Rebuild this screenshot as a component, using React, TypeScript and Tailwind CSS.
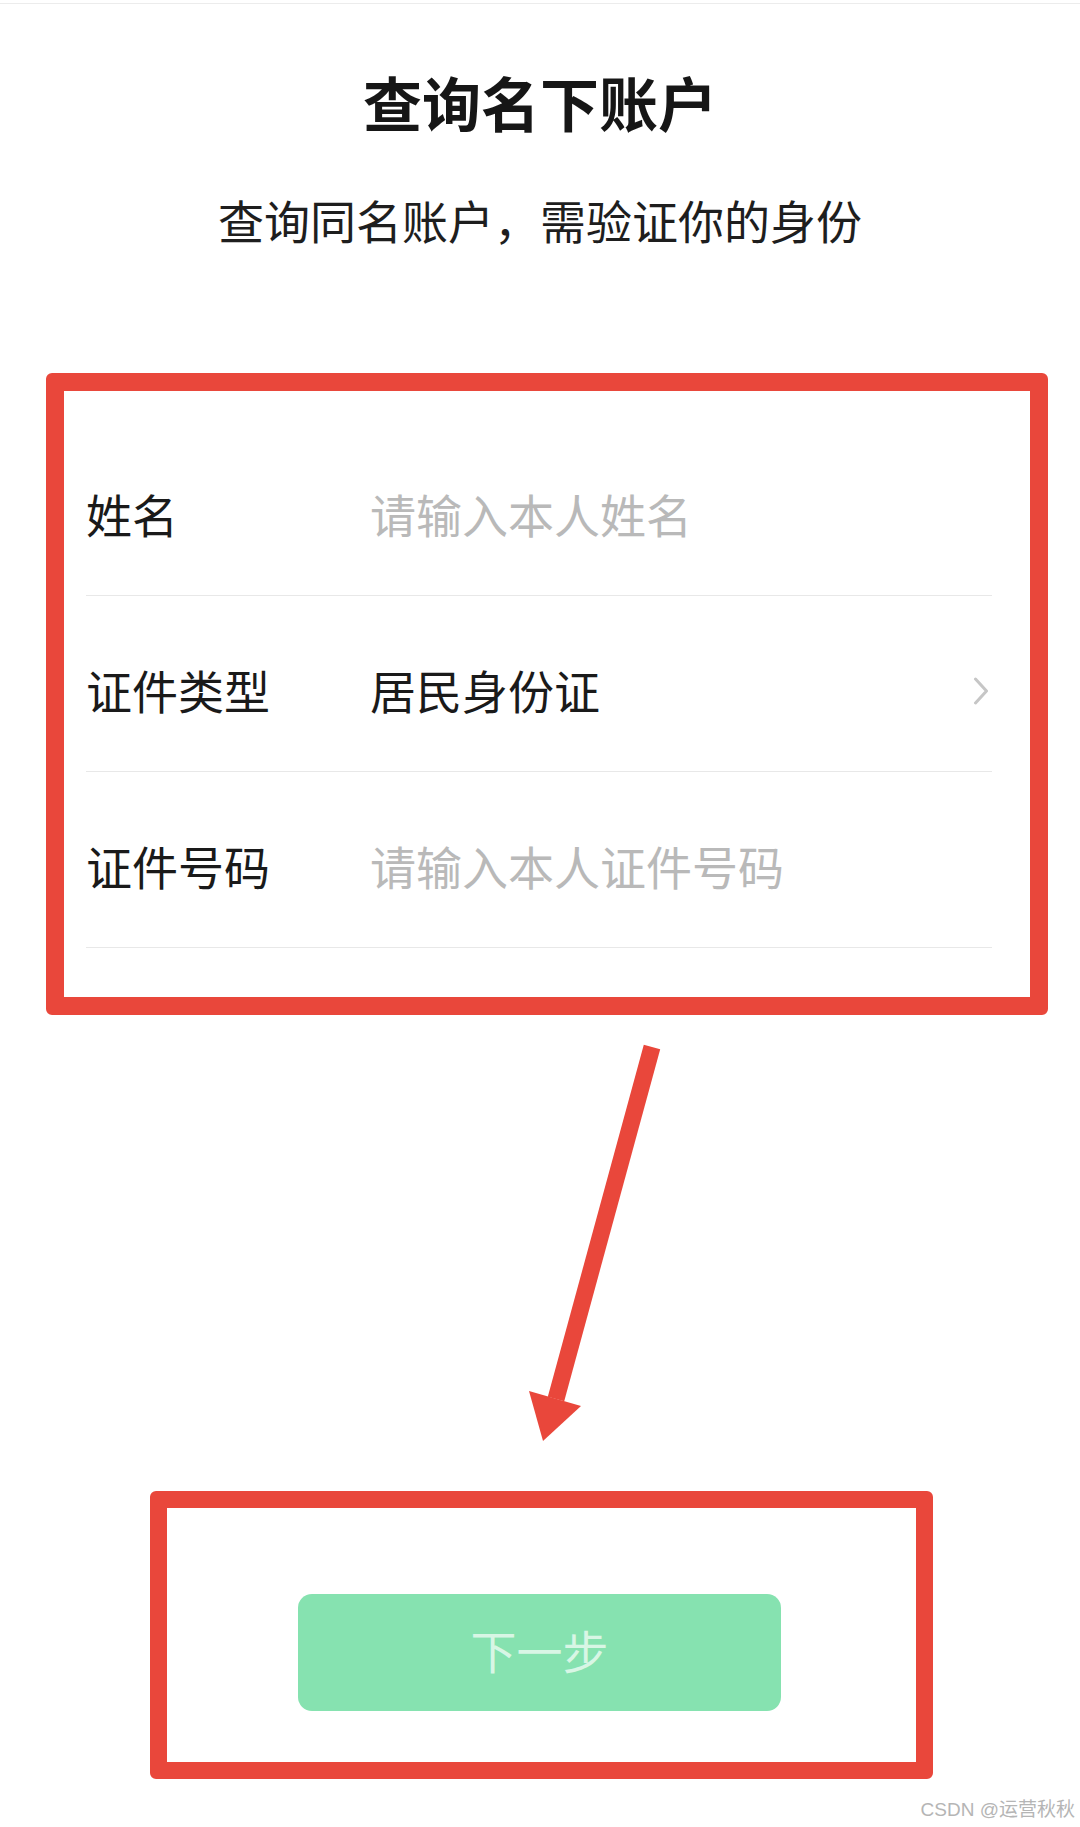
import React from 'react';

const rows = [
  { label: '姓名', value: '请输入本人姓名', placeholder: true },
  { label: '证件类型', value: '居民身份证', placeholder: false, chevron: true },
  { label: '证件号码', value: '请输入本人证件号码', placeholder: true },
];

function Chevron() {
  return (
    <svg width="16" height="28" viewBox="0 0 16 28" className="ml-auto mr-[3px] mt-[4px]">
      <polyline points="2.5,2 13.5,14 2.5,26" fill="none" stroke="#c6c6c6" strokeWidth="3" strokeLinejoin="round" strokeLinecap="round" />
    </svg>
  );
}

function Arrow() {
  return (
    <svg width="1080" height="476" viewBox="0 0 1080 476" className="block">
      <line x1="652" y1="32" x2="556" y2="384" stroke="#e9473b" strokeWidth="17" />
      <polygon points="529,376 581,391 543,426" fill="#e9473b" />
    </svg>
  );
}

export default function App() {
  return (
    <div
      className="w-[1080px] h-[1827px] bg-white overflow-hidden"
      style={{ fontFamily: '"Noto Sans CJK SC", "Noto Sans", sans-serif' }}
    >
      <div className="h-[3px]" />
      <div className="h-px bg-[#ececec]" />

      <h1 className="mt-[68px] text-center text-[59px] leading-none font-bold text-[#161616]">查询名下账户</h1>
      <p className="mt-[65px] text-center text-[46px] leading-none text-[#1e1e1e]">查询同名账户，需验证你的身份</p>

      {/* form section */}
      <div className="mt-[131px] ml-[46px] w-[1002px] border-[18px] border-[#e9473b] rounded-[6px] pt-[29px] pb-[49px] pl-[22px] pr-[38px]">
        {rows.map((row) => (
          <div key={row.label} className="flex items-center h-[176px] pt-[10px] border-b border-[#e8e8e8]">
            <span className="w-[284px] text-[46px] leading-none text-[#1a1a1a]">{row.label}</span>
            <span className={`text-[46px] leading-none ${row.placeholder ? 'text-[#b9b9b9]' : 'text-[#1a1a1a]'}`}>
              {row.value}
            </span>
            {row.chevron && <Chevron />}
          </div>
        ))}
      </div>

      <Arrow />

      {/* next step */}
      <div className="ml-[150px] w-[783px] h-[288px] border-[17px] border-[#e9473b] rounded-[6px] pt-[86px] pl-[131px]">
        <button className="w-[483px] h-[117px] pb-[8px] rounded-[14px] bg-[#86e2b0] text-[46px] leading-none text-[#d8f6e5] flex items-center justify-center">
          下一步
        </button>
      </div>

      <div
        className="mt-[21px] pr-[5px] text-right text-[19px] leading-none text-[#b5b5b5]"
        style={{ fontFamily: '"Liberation Sans", "Noto Sans CJK SC", sans-serif' }}
      >
        CSDN @运营秋秋
      </div>
    </div>
  );
}
